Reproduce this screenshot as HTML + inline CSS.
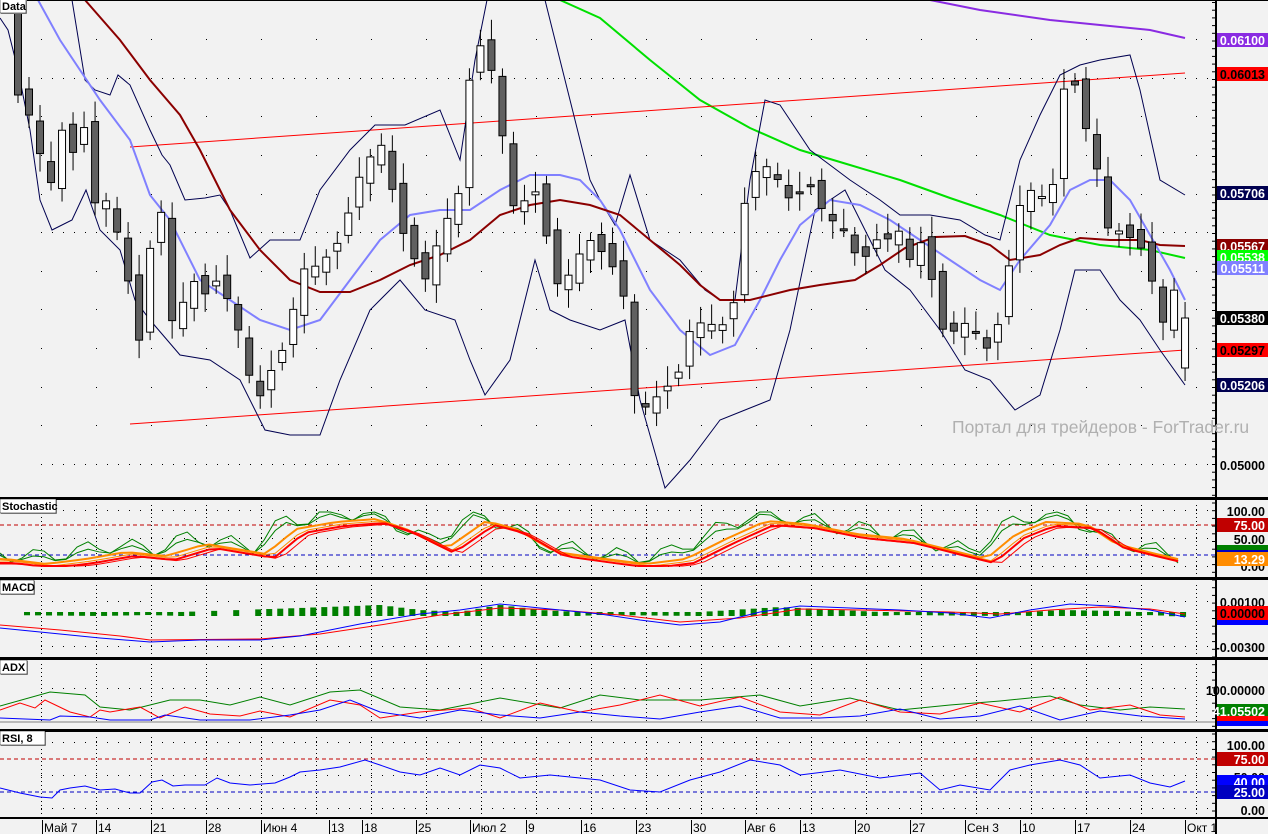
<!DOCTYPE html><html><head><meta charset="utf-8"><style>
html,body{margin:0;padding:0;background:#f2f2f2;}
svg{display:block;font-family:"Liberation Sans",sans-serif;}
</style></head><body>
<svg id="s" width="1268" height="834" xmlns="http://www.w3.org/2000/svg">
<rect width="1268" height="834" fill="#f2f2f2"/>
<g id="g"></g>
<text x="952" y="433" font-size="17.5" fill="#b0b0b0">Портал для трейдеров - ForTrader.ru</text>
</svg>
<script>
var NS="http://www.w3.org/2000/svg",G=document.getElementById('g');
function el(t,a,txt){var e=document.createElementNS(NS,t);for(var k in a)e.setAttribute(k,a[k]);if(txt!=null)e.textContent=txt;G.appendChild(e);return e;}
function pl(pts,c,w,d){el('polyline',{points:pts.map(p=>p.join(',')).join(' '),fill:'none',stroke:c,'stroke-width':w||1,'stroke-dasharray':d||'none'});}
function interp(key,x){for(var i=0;i<key.length-1;i++){if(x>=key[i][0]&&x<=key[i+1][0]){var t=(x-key[i][0])/(key[i+1][0]-key[i][0]);return key[i][1]+t*(key[i+1][1]-key[i][1]);}}return x<key[0][0]?key[0][1]:key[key.length-1][1];}
var X0=18,DX=11.01,N=107;
var xs=[];for(var i=0;i<N;i++)xs.push(X0+i*DX);
var AX=1215;
[39,78,116,155,194,232,271,309,348,387,425,464].forEach(function(y){for(var x=41;x<AX;x+=(y==78||y==232||y==464)?11:55)el('rect',{x:x,y:y,width:1,height:1,fill:'#000'});});
function vdots(y1,y2){for(var x=41;x<AX;x+=55)for(var y=y1;y<y2;y+=4)el('rect',{x:x,y:y,width:1,height:1,fill:'#000'});}
vdots(585,655);vdots(664,722);vdots(737,818);vdots(505,575);
function hdots(ys){ys.forEach(function(y){for(var x=41;x<AX;x+=11)el('rect',{x:x,y:y,width:1,height:1,fill:'#000'});});}
hdots([510,538,566,601,646,688,742,775,808]);
var purple=[[930,0],[980,10],[1050,20],[1100,25],[1150,30],[1185,38]];
var green=[[560,0],[600,18],[650,60],[700,100],[750,128],[800,150],[850,165],[900,180],[950,198],[1000,215],[1050,235],[1100,245],[1150,250],[1185,258]];
var brown=[[85,0],[120,40],[150,80],[180,115],[200,150],[230,210],[260,250],[290,280],[320,292],[350,292],[380,280],[410,265],[440,255],[470,240],[500,215],[530,205],[560,200],[590,205],[620,215],[650,240],[680,265],[700,285],[720,300],[750,300],[790,290],[820,285],[855,280],[880,265],[905,248],[935,237],[965,236],[990,245],[1010,260],[1040,255],[1060,245],[1080,238],[1110,240],[1140,240],[1160,245],[1185,246]];
var mid=[[38,0],[60,40],[100,100],[130,140],[150,195],[170,220],[200,280],[230,300],[260,320],[290,330],[320,320],[350,280],[380,240],[410,215],[440,210],[470,210],[500,190],[530,175],[560,175],[580,180],[600,200],[620,230],[650,290],[680,330],[710,355],[735,345],[760,300],[780,260],[800,225],[830,200],[860,205],[890,220],[920,240],[950,260],[980,280],[1000,290],[1020,260],[1050,225],[1070,190],[1090,180],[1110,180],[1130,200],[1150,235],[1170,270],[1185,300]];
var up=[[72,0],[85,80],[95,90],[110,95],[118,75],[130,85],[150,130],[162,155],[170,165],[185,200],[205,198],[220,195],[230,210],[250,258],[270,240],[300,240],[320,190],[350,150],[375,125],[405,125],[440,110],[460,160],[475,60],[487,0],[520,0],[545,0],[555,40],[575,120],[590,180],[600,200],[615,225],[630,175],[650,240],[680,260],[705,290],[720,300],[735,300],[750,180],[765,100],[780,105],[810,150],[850,180],[880,200],[900,215],[930,215],[960,220],[985,235],[1000,240],[1020,160],[1040,115],[1060,75],[1080,65],[1100,60],[1130,55],[1140,90],[1160,180],[1185,195]];
var lo=[[0,18],[8,30],[18,70],[30,130],[40,200],[52,230],[72,220],[86,190],[100,230],[120,250],[135,300],[150,320],[180,355],[210,360],[240,380],[265,430],[290,435],[320,435],[340,380],[370,310],[400,280],[425,310],[455,320],[470,360],[485,395],[510,360],[535,260],[550,310],[570,320],[600,330],[625,320],[640,400],[665,488],[690,460],[720,420],[745,410],[770,400],[790,330],[815,210],[845,190],[870,240],[885,270],[910,290],[940,330],[965,370],[990,380],[1015,410],[1040,395],[1060,330],[1075,270],[1100,270],[1120,300],[1140,320],[1160,350],[1185,385]];
pl(purple,'#8a2be2',2);pl(green,'#00e000',2);
el('line',{x1:130,y1:147,x2:1185,y2:73,stroke:'#f00','stroke-width':1});
el('line',{x1:130,y1:424,x2:1185,y2:350,stroke:'#f00','stroke-width':1});
pl(up,'#000050',1);pl(lo,'#000050',1);pl(mid,'#8080ff',2);pl(brown,'#8b0000',2);
var ck=[[18,95],[29,115],[41,157],[52,185],[63,125],[74,155],[85,125],[96,210],[107,200],[118,235],[129,285],[140,345],[151,240],[162,210],[173,330],[184,300],[195,280],[206,295],[217,280],[228,300],[245,350],[255,410],[266,380],[277,360],[288,340],[300,270],[320,265],[340,240],[360,175],[380,140],[395,200],[405,240],[425,280],[440,235],[460,190],[472,50],[482,45],[495,80],[505,155],[515,215],[525,200],[535,190],[550,250],[560,295],[575,260],[590,240],[610,260],[625,300],[635,400],[650,410],[660,390],[670,385],[680,370],[690,330],[705,320],[720,330],[735,300],[745,200],[760,160],[775,175],[790,200],[810,185],[825,215],[845,230],[860,265],[880,235],[890,240],[900,230],[910,260],[920,240],[935,290],[945,340],[955,330],[970,320],[985,350],[995,340],[1010,260],[1020,205],[1035,185],[1050,210],[1065,80],[1075,85],[1085,125],[1100,180],[1110,240],[1120,230],[1140,245],[1155,290],[1165,330],[1174,290],[1185,320]];
var prev=5;
for(var i=0;i<N;i++){var x=xs[i];var c=interp(ck,x);var o=prev+((i%3==0)?8:-6)*(i%2?1:-1);if(i==0)o=5;if(i==N-1){o=368;c=318;}
var hi=Math.min(o,c)-8-(i%4)*4,lw=Math.max(o,c)+8+(i%3)*5;
el('line',{x1:x,y1:hi,x2:x,y2:lw,stroke:'#000'});
var t=Math.min(o,c),h=Math.max(2,Math.abs(c-o));
el('rect',{x:x-3.5,y:t,width:7,height:h,fill:c>o?'#606060':'#fff',stroke:'#000'});prev=c;}
[[498,3],[578,3],[658,3],[730,3],[818,2]].forEach(function(a){el('rect',{x:0,y:a[0]-1,width:1268,height:a[1],fill:'#000'});});
el('rect',{x:AX,y:0,width:2,height:834,fill:'#000'});
el('rect',{x:0,y:0,width:1268,height:1,fill:'#000'});
for(var y=2;y<818;y+=7.7){el('rect',{x:AX-3,y:y,width:3,height:1,fill:'#000'});}
function lab(x,y,t,w){el('rect',{x:x-1,y:y-1,width:w,height:14,fill:'#999'});el('rect',{x:x-2,y:y-2,width:w,height:14,fill:'#fff',stroke:'#000','stroke-width':0.5});el('text',{x:x,y:y+9,'font-size':11,'font-weight':'bold'},t);}
lab(2,1,'Data',26);lab(2,501,'Stochastic',56);lab(2,582,'MACD',34);lab(2,662,'ADX',27);lab(2,733,'RSI, 8',45);
function rl(y,t,bg,fg){el('rect',{x:1217,y:y-7,width:51,height:14,fill:bg});el('text',{x:1265,y:y+5,'font-size':12.5,'font-weight':'bold','text-anchor':'end',fill:fg},t);}
function rt(y,t){el('text',{x:1265,y:y+5,'font-size':12.5,'font-weight':'bold','text-anchor':'end'},t);}
rt(465,'0.05000');
rl(40,'0.06100','#8a2be2','#fff');rl(74,'0.06013','#f00','#000');rl(193,'0.05706','#000050','#fff');
rl(246,'0.05567','#8b0000','#fff');rl(257,'0.05538','#00ff00','#fff');rl(268,'0.05511','#8080ff','#fff');
rl(318,'0.05380','#000','#fff');rl(350,'0.05297','#f00','#000');rl(385,'0.05206','#000050','#fff');
rt(511,'100.00');rl(525,'75.00','#c00000','#fff');rt(539,'50.00');rt(566,'0.00');
el('rect',{x:1217,y:545,width:51,height:5,fill:'#008000'});el('rect',{x:1217,y:550,width:51,height:4,fill:'#0000c0'});rl(559,'13.29','#ff8c00','#fff');
el('line',{x1:0,y1:525,x2:AX,y2:525,stroke:'#c00000','stroke-dasharray':'4,3'});
el('line',{x1:0,y1:555,x2:AX,y2:555,stroke:'#0000c0','stroke-dasharray':'4,3'});
var sk=[[0,555],[40,560],[80,555],[120,548],[160,552],[200,540],[230,545],[260,550],[290,525],[330,518],[370,515],[400,525],[440,545],[480,517],[510,525],[550,548],[600,555],[640,560],[680,555],[720,535],[760,517],[800,520],[850,530],[900,535],[940,545],[980,555],[1010,530],[1040,518],[1080,520],[1110,540],[1150,550],[1185,558]];
function ser(key,dx,dy,jit){var p=[];for(var x=0;x<=1185;x+=11.01){p.push([x,Math.max(512,Math.min(566,interp(key,x-dx)+dy+(jit?((Math.sin(x*0.7)*jit)):0)))]);}return p;}
pl(ser(sk,-8,-3,8),'#008000',1);pl(ser(sk,-4,0,4),'#008000',1);pl(ser(sk,6,4,0),'#ff8c00',2);pl(ser(sk,12,6,0),'#ff8c00',1);pl(ser(sk,14,8,0),'#f00',2);pl(ser(sk,20,9,0),'#f00',1);
rt(602,'0.00100');rl(613,'0.00000','#f00','#000');el('rect',{x:1217,y:620,width:51,height:5,fill:'#0000ff'});rt(647,'-0.00300');
var mh=[[0,613],[100,614],[150,613],[300,608],[380,605],[420,610],[460,612],[500,605],[540,610],[600,613],[700,612],[780,607],[840,610],[900,613],[1000,614],[1060,610],[1120,611],[1185,615]];
for(var i=1;i<N;i++){var x=xs[i]-2;if(i>15&&i<23&&i%2)continue;var y=interp(mh,x);var h=Math.abs(613-y)+3;el('rect',{x:x-3,y:Math.min(y,612),width:6,height:h,fill:'#008000'});}
var mb=[[0,628],[40,632],[100,638],[150,642],[200,640],[260,640],[300,636],[360,624],[420,614],[460,610],[500,604],[540,608],[600,614],[640,620],[680,625],[720,622],[760,612],[800,606],[850,608],[900,610],[950,613],[990,618],[1030,610],[1070,604],[1110,606],[1150,610],[1185,617]];
var mr=[[0,625],[60,630],[120,636],[150,640],[260,639],[320,634],[380,625],[440,615],[500,608],[560,610],[620,615],[680,622],[740,618],[800,609],[860,610],[950,612],[1000,614],[1050,610],[1100,607],[1150,609],[1185,614]];
pl(mr,'#f00',1);pl(mb,'#0000ff',1);
rt(690,'100.00000');rl(711,'41.05502','#008000','#fff');el('rect',{x:1217,y:716,width:51,height:5,fill:'#f00'});el('rect',{x:1217,y:721,width:51,height:5,fill:'#0000ff'});
el('line',{x1:0,y1:722,x2:AX,y2:722,stroke:'#808080'});
var ag=[[0,706],[50,692],[85,695],[100,707],[130,710],[170,700],[200,700],[230,705],[260,697],[290,705],[330,692],[360,690],[400,707],[440,710],[500,698],[560,708],[600,695],[640,700],[700,700],[760,695],[800,706],[850,698],[900,710],[950,705],[1000,701],[1050,696],[1080,705],[1120,710],[1150,707],[1185,709]];
var ar=[[0,710],[20,703],[35,708],[45,700],[70,712],[90,717],[100,710],[110,712],[140,707],[160,718],[185,707],[210,714],[240,716],[260,711],[290,717],[330,700],[360,705],[380,718],[420,712],[470,708],[500,718],[540,703],[580,712],[620,705],[660,695],[700,706],[740,697],[780,712],[820,715],[860,700],[900,712],[940,714],[980,703],[1020,712],[1060,697],[1090,710],[1130,705],[1160,715],[1185,717]];
var ab=[[0,718],[50,720],[60,716],[90,717],[110,720],[150,720],[165,715],[200,720],[250,720],[290,715],[320,710],[350,700],[380,712],[420,718],[460,710],[500,715],[540,718],[580,712],[620,716],[660,719],[700,712],[740,706],[780,718],[820,718],[860,716],[900,709],[940,719],[980,716],[1020,706],[1060,720],[1100,711],[1140,716],[1185,719]];
pl(ag,'#008000',1);pl(ar,'#f00',1);pl(ab,'#0000ff',1);
rt(745,'100.00');rl(759,'75.00','#c00000','#fff');rt(777,'50.00');rl(782,'40.00','#0000ff','#fff');rl(792,'25.00','#0000c0','#fff');rt(810,'0.00');
el('line',{x1:0,y1:759,x2:AX,y2:759,stroke:'#c00000','stroke-dasharray':'4,3'});
el('line',{x1:0,y1:792,x2:AX,y2:792,stroke:'#0000c0','stroke-dasharray':'4,3'});
var rs=[[0,788],[20,793],[40,797],[52,798],[60,790],[70,788],[85,786],[100,790],[115,789],[130,793],[140,793],[152,782],[162,780],[173,786],[185,785],[205,785],[217,778],[230,783],[250,785],[275,783],[290,777],[300,772],[320,770],[340,767],[365,760],[380,765],[400,772],[420,775],[440,768],[460,775],[480,765],[500,768],[520,778],[550,775],[600,780],[630,790],[660,792],[690,780],[720,772],[750,760],[780,765],[800,775],[840,770],[880,778],[920,773],[940,790],[960,785],[990,790],[1010,770],[1030,765],[1060,760],[1080,765],[1100,778],[1130,775],[1150,783],[1170,787],[1185,781]];
pl(rs,'#0000ff',1);
[['Май 7',42],['14',96],['21',151],['28',206],['Июн 4',261],['13',329],['18',362],['25',416],['Июл 2',470],['9',526],['16',581],['23',636],['30',691],['Авг 6',745],['13',800],['20',855],['27',910],['Сен 3',965],['10',1020],['17',1075],['24',1130],['Окт 1',1185]].forEach(function(a){el('rect',{x:a[1],y:820,width:1,height:14,fill:'#000'});el('text',{x:a[1]+2,y:832,'font-size':12},a[0]);});
</script>
</body></html>
